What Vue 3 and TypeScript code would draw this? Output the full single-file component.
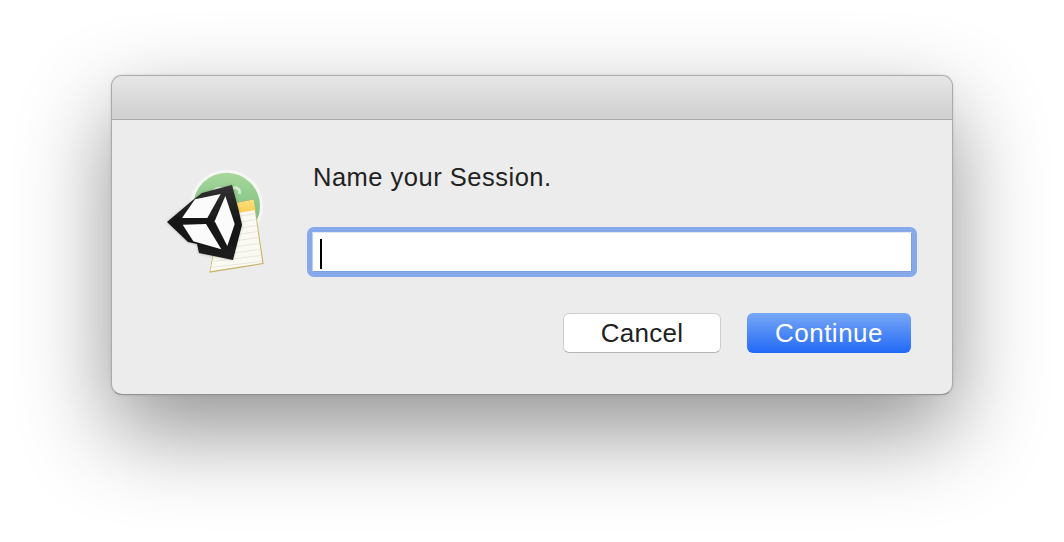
<script setup lang="ts">
const title = 'Name your Session.'
</script>

<template>
  <div class="page">
    <div class="dialog">
      <div class="titlebar"></div>
      <div class="content">
        <svg class="app-icon" viewBox="0 0 390 375" width="130" height="125" aria-hidden="true">
          <defs>
            <linearGradient id="green" x1="0" y1="0" x2="0" y2="1">
              <stop offset="0" stop-color="#a8d79a" />
              <stop offset="1" stop-color="#68b57a" />
            </linearGradient>
            <linearGradient id="note" x1="0" y1="0" x2="0" y2="1">
              <stop offset="0" stop-color="#ffe27a" />
              <stop offset="1" stop-color="#f8c84a" />
            </linearGradient>
            <linearGradient id="cube" x1="0" y1="0" x2="0" y2="1">
              <stop offset="0" stop-color="#333" />
              <stop offset="0.5" stop-color="#151515" />
              <stop offset="1" stop-color="#1c1c1c" />
            </linearGradient>
            <filter id="soft" x="-10%" y="-10%" width="120%" height="120%">
              <feGaussianBlur stdDeviation="1.5" />
            </filter>
            <filter id="shade" x="-20%" y="-20%" width="140%" height="140%">
              <feGaussianBlur stdDeviation="5" />
            </filter>
          </defs>
          <circle cx="230" cy="138" r="109" fill="#f5f7f4" />
          <circle cx="230" cy="138" r="100" fill="url(#green)" />
          <path d="M192 92c6-10 28-10 32 0M248 84c14-4 24 6 20 18" fill="none" stroke="#d5ecd0" stroke-width="8" />
          <g filter="url(#soft)">
            <polygon points="218,135 312,117 341,312 178,338" fill="#c9b36a" />
            <polygon points="220,138 310,120 337,309 181,334" fill="#fbfaf2" />
            <polygon points="220,138 310,120 316,150 224,166" fill="url(#note)" />
            <g stroke="#dedcd0" stroke-width="2">
              <line x1="226" y1="176" x2="318" y2="160" />
              <line x1="224" y1="194" x2="320" y2="178" />
              <line x1="222" y1="212" x2="323" y2="196" />
              <line x1="220" y1="230" x2="326" y2="214" />
              <line x1="218" y1="248" x2="328" y2="232" />
              <line x1="212" y1="266" x2="331" y2="250" />
              <line x1="196" y1="286" x2="333" y2="268" />
              <line x1="190" y1="304" x2="335" y2="286" />
              <line x1="186" y1="322" x2="337" y2="304" />
            </g>
          </g>
          <polygon
            points="51,186 129,123 156,99 246,75 276,195 246,300 147,279 141,252 114,246"
            fill="#000"
            opacity="0.25"
            filter="url(#shade)"
          />
          <g filter="url(#soft)">
            <polygon
              points="51,186 126,122 156,99 246,75 266,150 276,195 249,300 147,279 141,252 114,246"
              fill="url(#cube)"
            />
            <polygon points="96,174 135,118 212,102 172,174" fill="#fbfbfb" />
            <polygon points="226,108 254,192 232,258 194,184" fill="#fbfbfb" />
            <polygon points="98,194 168,192 214,268 130,244" fill="#fbfbfb" />
          </g>
        </svg>
        <div class="main">
          <p class="title">{{ title }}</p>
          <div class="field-ring">
            <div class="field"><span class="caret"></span></div>
          </div>
          <div class="actions">
            <button class="btn cancel" type="button">Cancel</button>
            <button class="btn primary" type="button">Continue</button>
          </div>
        </div>
      </div>
    </div>
  </div>
</template>

<style>
html,
body {
  margin: 0;
  background: #fff;
}
</style>

<style scoped>
.page {
  width: 1064px;
  height: 542px;
  box-sizing: border-box;
  padding: 75px 111px 0;
  overflow: hidden;
  background: #fff;
  font-family: "Liberation Sans", Arial, sans-serif;
}
.dialog {
  width: 842px;
  height: 320px;
  box-sizing: border-box;
  display: flex;
  flex-direction: column;
  border-radius: 11px;
  border: 1px solid #ababab;
  border-bottom-color: #929292;
  background: #ececec;
  overflow: hidden;
  box-shadow: 0 36px 90px rgba(0, 0, 0, 0.43), 0 0 3px rgba(0, 0, 0, 0.12);
}
.titlebar {
  height: 44px;
  flex: none;
  box-sizing: border-box;
  background: linear-gradient(#e6e6e6, #cfcfcf);
  border-bottom: 1px solid #a9a9a9;
}
.content {
  flex: 1;
  display: flex;
  align-items: flex-start;
  padding-left: 38px;
}
.app-icon {
  flex: none;
  margin-top: 40px;
}
.main {
  margin-left: 27px;
  width: 610px;
  display: flex;
  flex-direction: column;
}
.title {
  margin: 41px 0 0 6px;
  height: 32px;
  font-size: 25.5px;
  line-height: 32px;
  letter-spacing: 0.5px;
  color: #222;
}
.field-ring {
  margin-top: 34px;
  height: 50px;
  box-sizing: border-box;
  padding: 5px;
  border-radius: 7px;
  background: #86a9ec;
}
.field {
  height: 40px;
  box-sizing: border-box;
  display: flex;
  align-items: center;
  padding-left: 7px;
  background: #fff;
  border: 1px solid #7a9edf;
  border-top-color: #dfe7f7;
  border-left-color: #b9cdf2;
}
.caret {
  width: 2px;
  height: 30px;
  margin-top: 3px;
  background: #000;
}
.actions {
  margin-top: 36px;
  display: flex;
  justify-content: flex-end;
  gap: 26px;
  padding-right: 6px;
}
.btn {
  height: 40px;
  box-sizing: border-box;
  padding: 0;
  border-radius: 6px;
  font-family: inherit;
  font-size: 26px;
  line-height: 38px;
  letter-spacing: 0.3px;
}
.cancel {
  width: 158px;
  color: #222;
  background: #fff;
  border: 1px solid #cfcfcf;
  border-bottom-color: #b4b4b4;
}
.primary {
  width: 164px;
  color: #fff;
  border: 0;
  letter-spacing: 0.5px;
  background: linear-gradient(#78a7f6, #2269f7);
}
</style>
